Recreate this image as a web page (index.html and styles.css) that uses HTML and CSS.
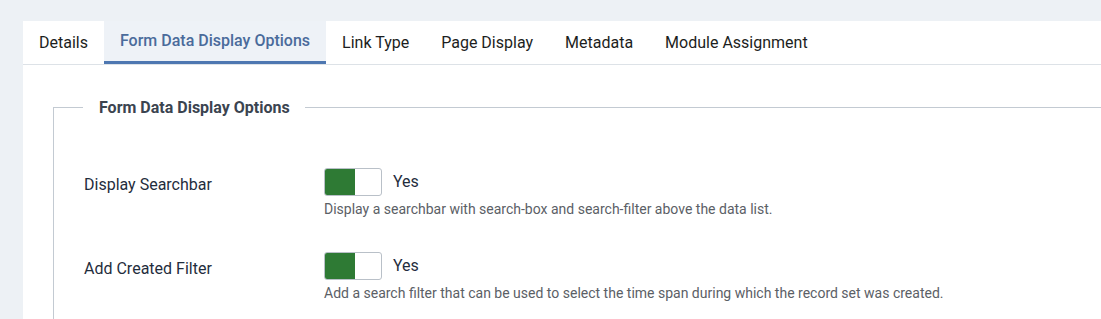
FILE: index.html
```html
<!DOCTYPE html>
<html lang="en">
<head>
    <meta charset="UTF-8">
    <title>Menu Item: Form Data Display Options</title>
    <link rel="stylesheet" href="styles.css">
</head>
<body>
    <div class="card">
        <div class="tabs">
            <div class="tab">Details</div>
            <div class="tab active">Form Data Display Options</div>
            <div class="tab">Link Type</div>
            <div class="tab">Page Display</div>
            <div class="tab">Metadata</div>
            <div class="tab">Module Assignment</div>
        </div>
        <div class="tab-content">
            <fieldset class="options">
                <legend>Form Data Display Options</legend>

                <div class="control-group">
                    <div class="control-label">Display Searchbar</div>
                    <div class="controls">
                        <div class="switch-line">
                            <span class="switch"><span class="knob"></span></span>
                            <span class="switch-text">Yes</span>
                        </div>
                        <div class="desc">Display a searchbar with search-box and search-filter above the data list.</div>
                    </div>
                </div>

                <div class="control-group">
                    <div class="control-label">Add Created Filter</div>
                    <div class="controls">
                        <div class="switch-line">
                            <span class="switch"><span class="knob"></span></span>
                            <span class="switch-text">Yes</span>
                        </div>
                        <div class="desc">Add a search filter that can be used to select the time span during which the record set was created.</div>
                    </div>
                </div>
            </fieldset>
        </div>
    </div>
</body>
</html>
```

FILE: styles.css
```css
:root {
    --page-bg: #edf1f5;
    --tab-active-bg: #eef2f7;
    --tab-accent: #4e77b1;
    --tab-active-text: #4a6b9b;
    --line: #dde2e7;
    --fieldset-line: #c3cad2;
    --label-text: #1f2d3d;
    --desc-text: #5b6066;
    --switch-on: #2e7a34;
}

body {
    font-family: Roboto, "Noto Sans", Arial, sans-serif;
    background-color: var(--page-bg);
    margin: 0;
    padding: 21px 0 0 23px;
    overflow: hidden;
    height: 319px;
    box-sizing: border-box;
}

.card {
    background: #fff;
    width: 1120px;
    height: 298px;
}

.tabs {
    display: flex;
    border-bottom: 1px solid var(--line);
}

.tab {
    font-size: 16px;
    color: #1c1e21;
    padding: 0 16px;
    height: 43px;
    line-height: 43px;
    box-sizing: border-box;
}

.tab.active {
    background: var(--tab-active-bg);
    color: var(--tab-active-text);
    font-weight: 500;
    border-bottom: 3px solid var(--tab-accent);
    line-height: 40px;
}

.tab-content {
    padding: 33px 0 0 30px;
}

.options {
    margin: 0;
    border: 0;
    border-top: 1px solid var(--fieldset-line);
    border-left: 1px solid var(--fieldset-line);
    padding: 0 0 0 30px;
    min-height: 190px;
}

.options legend {
    font-size: 16px;
    font-weight: 700;
    color: #3b4450;
    padding: 0 15px 0 16px;
    margin-left: -1px;
}

.control-group {
    display: flex;
    align-items: flex-start;
    margin-bottom: 35px;
}

.control-group:first-of-type {
    margin-top: 51px;
}

.control-label {
    width: 240px;
    font-size: 16px;
    color: var(--label-text);
    padding-top: 7px;
}

.switch-line {
    display: flex;
    align-items: center;
    height: 28px;
}

.switch {
    display: inline-flex;
    width: 58px;
    height: 28px;
    box-sizing: border-box;
    border: 1px solid #b9c0c8;
    border-radius: 3px;
    overflow: hidden;
    background: #fff;
}

.knob {
    width: 30px;
    background: var(--switch-on);
}

.switch-text {
    margin-left: 11px;
    font-size: 16px;
    color: var(--label-text);
    margin-top: -1px;
}

.desc {
    font-size: 14px;
    color: var(--desc-text);
    margin-top: 5px;
}
```
